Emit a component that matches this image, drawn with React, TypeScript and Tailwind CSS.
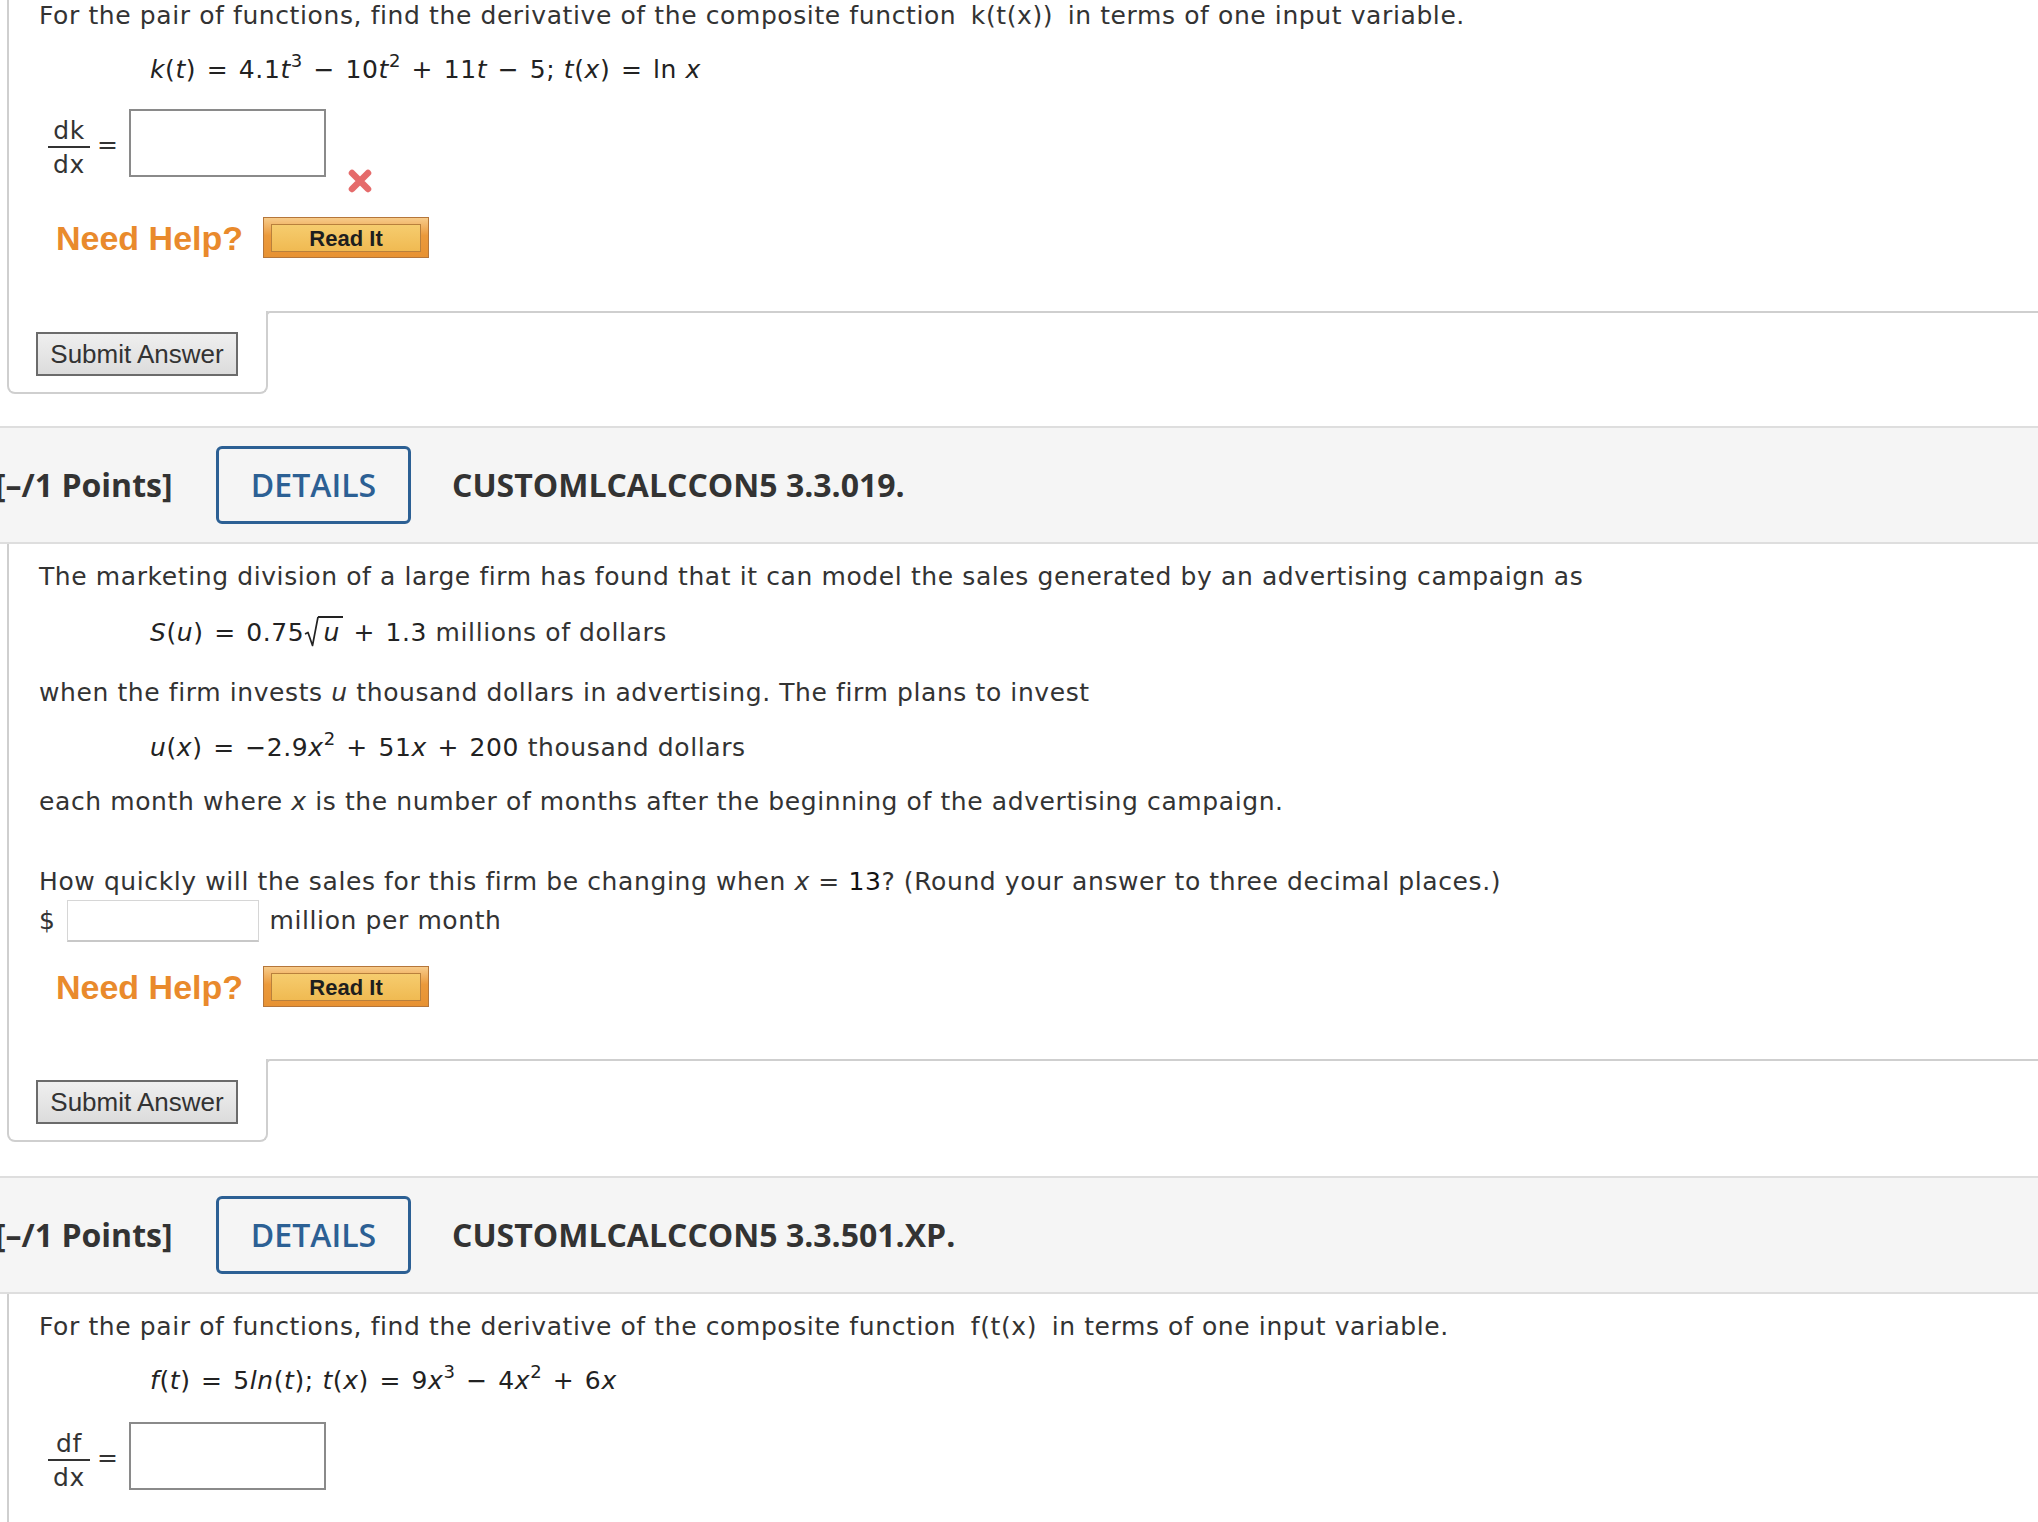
import React from "react";

const border = "border-[#cfcfcf]";

const Sup = ({ children }: { children: React.ReactNode }) => (
  <sup className="text-[18px] -top-[0.6em]">{children}</sup>
);

// operator with a bit of extra room, like the math renderer does
const Op = ({ children }: { children: React.ReactNode }) => (
  <span className="px-[2px]">{children}</span>
);

const Sqrt = ({ children }: { children: React.ReactNode }) => (
  <span className="relative inline-block pl-[19px] pr-[3px] italic">
    {children}
    <svg width="15" height="31" viewBox="0 0 15 31" className="absolute left-0 -top-[2px]">
      <path d="M1 18 L4 16.5 L8.5 29.5 L14 1" stroke="#222" strokeWidth="1.7" fill="none" strokeLinejoin="round" />
    </svg>
    <span className="absolute left-[14px] right-0 -top-[2px] h-[2px] bg-[#222]" />
  </span>
);

const Fraction = ({ top }: { top: string }) => (
  <div className="flex flex-col items-center w-[42px] ml-[9px] mt-[7px]">
    <span className="leading-[30px]">{top}</span>
    <span className="h-[2px] w-full bg-[#333]" />
    <span className="leading-[30px] mt-[2px]">dx</span>
  </div>
);

const RedX = () => (
  <svg width="26" height="26" viewBox="0 0 26 26" className="ml-[21px] mt-[59px]">
    <path
      d="M5 5 L21 21 M21 5 L5 21"
      stroke="#e35b5b"
      strokeWidth="6.5"
      strokeLinecap="round"
      opacity="0.9"
    />
  </svg>
);

const AnswerRow = ({ top, wrong, mt }: { top: string; wrong?: boolean; mt: string }) => (
  <div className={`flex items-start ${mt}`}>
    <Fraction top={top} />
    <span className="ml-[7px] mt-[21px] leading-[30px]">=</span>
    <div className="ml-[10px] w-[197px] h-[68px] border-2 border-[#8a8a8a] bg-white" />
    {wrong && <RedX />}
  </div>
);

const NeedHelp = ({ mt }: { mt: string }) => (
  <div className={`flex items-center ml-[17px] tracking-normal ${mt}`}>
    <span className="font-['Liberation_Sans',Arial,sans-serif] font-bold text-[34px] text-[#e98a2c] leading-none">
      Need Help?
    </span>
    <div className="ml-[20px] w-[166px] h-[41px] border border-[#b5763a] bg-[linear-gradient(#f7cb8a,#eb9a3c_45%,#e79233)] px-[7px] pt-[6px] pb-[5px]">
      <div className="h-full border border-[#b9803c] bg-[linear-gradient(#f6cc6e,#f0ba52)] flex items-center justify-center font-['Liberation_Sans',Arial,sans-serif] font-bold text-[22px] text-[#1e1e1e]">
        Read It
      </div>
    </div>
  </div>
);

const SubmitRow = () => (
  <div className="flex">
    <div className={`ml-[7px] w-[261px] border-l-2 border-r-2 border-b-2 ${border} rounded-b-[8px] pl-[27px] pt-[21px] pb-[16px]`}>
      <button className="w-[202px] h-[44px] border-2 border-[#6b6b6b] bg-[linear-gradient(#efefef,#dcdcdc)] font-['Liberation_Sans',Arial,sans-serif] text-[26px] tracking-normal text-[#333]">
        Submit Answer
      </button>
    </div>
    <div className={`flex-1 -ml-[2px] h-[20px] border-t-2 border-l-2 ${border} rounded-tl-[4px]`} />
  </div>
);

const Header = ({ code }: { code: string }) => (
  <div className="flex items-center h-[118px] border-y-2 border-[#dedede] bg-[#f5f5f5] font-['Open_Sans',sans-serif] tracking-normal">
    <div className="w-[216px] shrink-0">
      <span className="-ml-[5px] text-[32px] font-bold text-[#333]">[–/1 Points]</span>
    </div>
    <div className="w-[195px] h-[78px] shrink-0 border-[3px] border-[#2c6094] rounded-[6px] flex items-center justify-center text-[32px] font-semibold text-[#2c6094]">
      DETAILS
    </div>
    <span className="ml-[41px] text-[32px] font-bold text-[#333]">{code}</span>
  </div>
);

const Body = ({ children, pb }: { children: React.ReactNode; pb: string }) => (
  <div className={`ml-[7px] border-l-2 ${border} pl-[30px] pt-[18px] ${pb}`}>{children}</div>
);

const Eq = ({ children, mt }: { children: React.ReactNode; mt: string }) => (
  <div className={`ml-[111px] h-[30px] leading-[30px] text-[#222] ${mt}`}>{children}</div>
);

export default function App() {
  return (
    <div className="w-full h-[1522px] overflow-hidden bg-white text-[#333] text-[25px] tracking-[0.6px] font-['DejaVu_Sans',Verdana,sans-serif]">
      {/* question 1, top cut off */}
      <div className="-mt-[17px] mb-[32px]">
        <Body pb="pb-[53px]">
          <p className="leading-[30px]">
            For the pair of functions, find the derivative of the composite function{" "}
            <span className="px-[6px]">k(t(x))</span> in terms of one input variable.
          </p>
          <Eq mt="mt-[24px]">
            <i>k</i>(<i>t</i>) <Op>=</Op> 4.1<i>t</i>
            <Sup>3</Sup> <Op>−</Op> 10<i>t</i>
            <Sup>2</Sup> <Op>+</Op> 11<i>t</i> <Op>−</Op> 5; <i>t</i>(<i>x</i>) <Op>=</Op> ln <i>x</i>
          </Eq>
          <AnswerRow top="dk" wrong mt="mt-[24px]" />
          <NeedHelp mt="mt-[23px]" />
        </Body>
        <SubmitRow />
      </div>

      {/* question 2 */}
      <Header code="CUSTOMLCALCCON5 3.3.019." />
      <div className="mb-[34px]">
        <Body pb="pb-[52px]">
          <p className="leading-[30px]">
            The marketing division of a large firm has found that it can model the sales generated by an advertising campaign as
          </p>
          <Eq mt="mt-[26px]">
            <i>S</i>(<i>u</i>) <Op>=</Op> 0.75<Sqrt>u</Sqrt> <Op>+</Op> 1.3{" "}
            <span className="text-[#333]">millions of dollars</span>
          </Eq>
          <p className="leading-[30px] mt-[30px]">
            when the firm invests <i>u</i> thousand dollars in advertising. The firm plans to invest
          </p>
          <Eq mt="mt-[25px]">
            <i>u</i>(<i>x</i>) <Op>=</Op> −2.9<i>x</i>
            <Sup>2</Sup> <Op>+</Op> 51<i>x</i> <Op>+</Op> 200 <span className="text-[#333]">thousand dollars</span>
          </Eq>
          <p className="leading-[30px] mt-[24px]">
            each month where <i>x</i> is the number of months after the beginning of the advertising campaign.
          </p>
          <p className="leading-[30px] mt-[50px]">
            How quickly will the sales for this firm be changing when <i>x</i> = <span className="text-[#111]">13</span>? (Round your answer to three decimal places.)
          </p>
          <div className="flex items-center mt-[3px] h-[42px]">
            <span>$</span>
            <div className="ml-[11px] w-[192px] h-[42px] border border-[#d6d6d6] border-b-2 border-b-[#c8c8c8] bg-white" />
            <span className="ml-[11px]">million per month</span>
          </div>
          <NeedHelp mt="mt-[24px]" />
        </Body>
        <SubmitRow />
      </div>

      {/* question 3 */}
      <Header code="CUSTOMLCALCCON5 3.3.501.XP." />
      <Body pb="pb-[60px]">
        <p className="leading-[30px]">
          For the pair of functions, find the derivative of the composite function{" "}
          <span className="px-[6px]">f(t(x)</span> in terms of one input variable.
        </p>
        <Eq mt="mt-[24px]">
          <i>f</i>(<i>t</i>) <Op>=</Op> 5<i>ln</i>(<i>t</i>); <i>t</i>(<i>x</i>) <Op>=</Op> 9<i>x</i>
          <Sup>3</Sup> <Op>−</Op> 4<i>x</i>
          <Sup>2</Sup> <Op>+</Op> 6<i>x</i>
        </Eq>
        <AnswerRow top="df" mt="mt-[26px]" />
      </Body>
    </div>
  );
}
